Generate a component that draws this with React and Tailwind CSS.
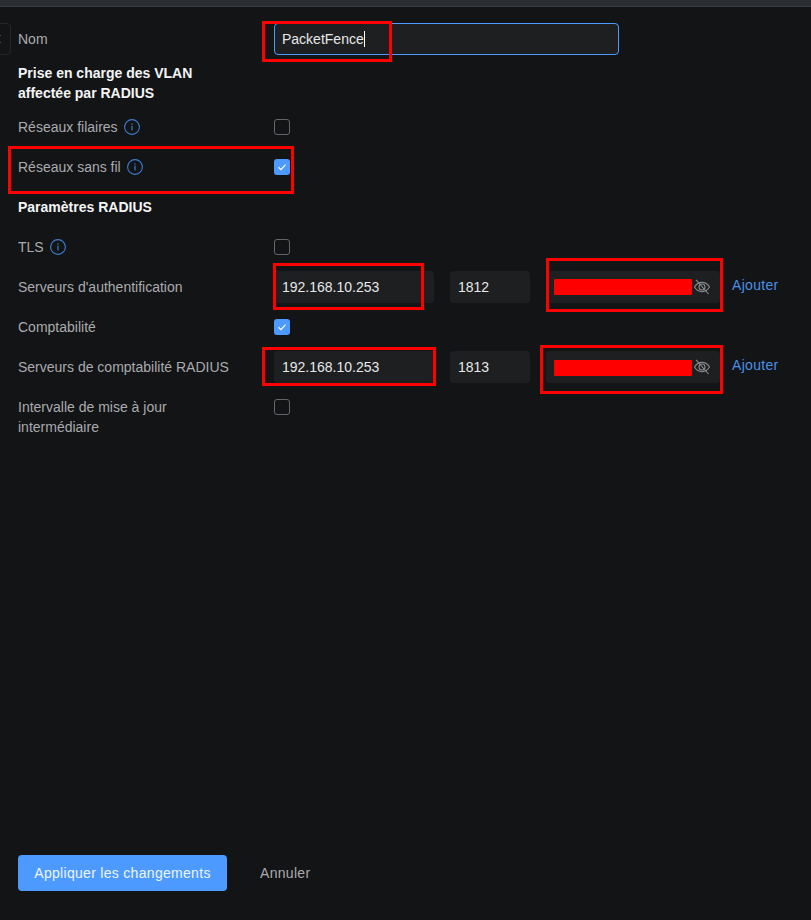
import React from "react";

function InfoIcon() {
  return (
    <svg width="16" height="16" viewBox="0 0 16 16" fill="none" className="shrink-0">
      <circle cx="8" cy="8" r="7.4" stroke="#3d7fd0" strokeWidth="1.1" />
      <rect x="7.4" y="6.8" width="1.2" height="4.6" fill="#3d7fd0" />
      <rect x="7.4" y="4.4" width="1.2" height="1.3" fill="#3d7fd0" />
    </svg>
  );
}

function EyeOff() {
  return (
    <svg width="16" height="16" viewBox="0 0 16 16" fill="none" stroke="#8a8c90" strokeWidth="1.1" className="shrink-0">
      <path d="M0.5 8C2.3 5 5 3.4 8 3.4S13.7 5 15.5 8C13.7 11 11 12.6 8 12.6S2.3 11 0.5 8Z" />
      <circle cx="8" cy="8" r="3" />
      <path d="M2 0.8L14.5 15" />
    </svg>
  );
}

function Checkbox({ checked }) {
  if (checked) {
    return (
      <div className="w-4 h-4 rounded-[3px] bg-[#4c9aff] flex items-center justify-center">
        <svg width="10" height="10" viewBox="0 0 10 10" fill="none" stroke="#ffffff" strokeWidth="1.2">
          <path d="M1.5 5.2L4 7.6L8.5 2.6" />
        </svg>
      </div>
    );
  }
  return <div className="w-4 h-4 rounded-[3px] border border-[#62666d]" />;
}

function Row({ label, info, children }) {
  return (
    <div className="flex items-center min-h-8">
      <div className="w-[256px] pr-6 flex items-center gap-1.5 text-[#a9abae]">
        <span>{label}</span>
        {info && <InfoIcon />}
      </div>
      {children}
    </div>
  );
}

function Field({ children, className }) {
  return (
    <div className={`h-8 rounded-[4px] bg-[#1d1f21] pl-2 flex items-center text-[#e8e8e9] ${className}`}>
      {children}
    </div>
  );
}

function ServerRow({ label, ip, port, barClass }) {
  return (
    <Row label={label}>
      <div className="flex items-center gap-4">
        <Field className="w-[160px]">{ip}</Field>
        <Field className="w-[80px]">{port}</Field>
        <Field className="w-[174px] relative">
          <div className="flex-1" />
          <div className="pr-2.5"><EyeOff /></div>
          <div className={`absolute left-2 w-[138px] h-4 rounded-[1px] bg-[#ff0000] ${barClass}`} />
        </Field>
      </div>
      <span className="ml-3 text-[#4c8fe6] tracking-[0.3px] -mt-1">Ajouter</span>
    </Row>
  );
}

export default function App() {
  return (
    <div className="relative min-h-[920px] bg-[#131416] text-sm leading-5 font-['Liberation_Sans',Arial,sans-serif]">
      <div className="h-[7px] bg-[#2a2d32] border-b border-[#3a3b42]" />

      <div className="absolute left-[-8px] top-[23px] w-[19px] h-8 rounded-[4px] border border-[#232528] flex items-center justify-end pr-2">
        <svg width="6" height="10" viewBox="0 0 6 10" fill="none" stroke="#4a4c50" strokeWidth="1">
          <path d="M5 1L1 5L5 9" />
        </svg>
      </div>

      <div className="pl-[18px] pt-4 flex flex-col gap-2">
        <Row label="Nom">
          <div className="w-[345px] h-8 rounded-[4px] border border-[#4c9aff] bg-[#1d1f21] pl-[7px] flex items-center text-[#e8e8e9]">
            PacketFence
            <span className="w-px h-4 bg-white" />
          </div>
        </Row>

        <div className="w-[220px] font-bold text-[#f4f4f5]">Prise en charge des VLAN affectée par RADIUS</div>

        <Row label="Réseaux filaires" info><Checkbox /></Row>
        <Row label="Réseaux sans fil" info><Checkbox checked /></Row>

        <div className="h-8 flex items-center font-bold text-[#f4f4f5]">Paramètres RADIUS</div>

        <Row label="TLS" info><Checkbox /></Row>
        <ServerRow label="Serveurs d'authentification" ip="192.168.10.253" port="1812" barClass="top-2" />
        <Row label="Comptabilité"><Checkbox checked /></Row>
        <ServerRow label="Serveurs de comptabilité RADIUS" ip="192.168.10.253" port="1813" barClass="top-[9px]" />
        <div className="flex items-start">
          <div className="w-[256px] pr-6 text-[#a9abae] pt-1.5 leading-5">Intervalle de mise à jour intermédiaire</div>
          <div className="pt-2"><Checkbox /></div>
        </div>
      </div>

      <div className="absolute left-[18px] top-[855px] flex items-center gap-[33px] tracking-[0.3px]">
        <button className="h-9 w-[209px] rounded-[4px] bg-[#4c9aff] text-[#eef5ff]">Appliquer les changements</button>
        <button className="text-[#a9abae]">Annuler</button>
      </div>

      {/* red annotation boxes drawn over the form */}
      <div className="absolute left-[262px] top-[21px] w-[130px] h-[41px] border-[3px] border-[#ff0000]" />
      <div className="absolute left-[8px] top-[146px] w-[286px] h-[48px] border-[3px] border-[#ff0000]" />
      <div className="absolute left-[273px] top-[263px] w-[151px] h-[47px] border-[3px] border-[#ff0000]" />
      <div className="absolute left-[546px] top-[258px] w-[177px] h-[54px] border-[3px] border-[#ff0000]" />
      <div className="absolute left-[262px] top-[347px] w-[174px] h-[39px] border-[3px] border-[#ff0000]" />
      <div className="absolute left-[540px] top-[345px] w-[183px] h-[49px] border-[3px] border-[#ff0000]" />
    </div>
  );
}
